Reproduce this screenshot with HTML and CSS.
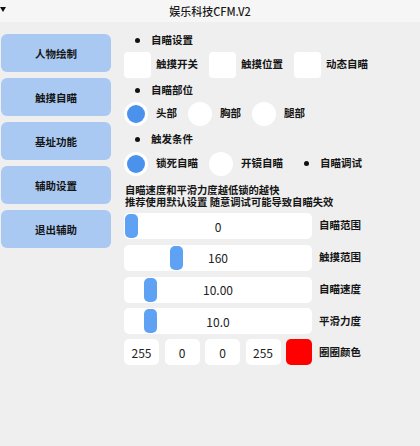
FILE: index.html
```html
<!DOCTYPE html>
<html lang="zh">
<head>
    <meta charset="UTF-8">
    <meta name="viewport" content="width=device-width, initial-scale=1.0">
    <title>娱乐科技CFM.V2</title>
    <link rel="stylesheet" href="styles.css">
</head>
<body>
    <header class="titleBar">
        <span class="collapse"></span>
        <span class="title">娱乐科技CFM.V2</span>
    </header>

    <main class="layout">
        <!-- left menu -->
        <nav class="sideMenu">
            <div class="menuBtn">人物绘制</div>
            <div class="menuBtn">触摸自瞄</div>
            <div class="menuBtn">基址功能</div>
            <div class="menuBtn">辅助设置</div>
            <div class="menuBtn">退出辅助</div>
        </nav>

        <!-- settings panel -->
        <section class="panel">
            <div class="heading">自瞄设置</div>
            <div class="optRow">
                <div class="opt"><span class="box"></span><span class="lbl">触摸开关</span></div>
                <div class="opt"><span class="box"></span><span class="lbl">触摸位置</span></div>
                <div class="opt"><span class="box"></span><span class="lbl">动态自瞄</span></div>
            </div>

            <div class="heading">自瞄部位</div>
            <div class="optRow radioRow">
                <div class="opt"><span class="radio on"></span><span class="lbl">头部</span></div>
                <div class="opt"><span class="radio"></span><span class="lbl">胸部</span></div>
                <div class="opt"><span class="radio"></span><span class="lbl">腿部</span></div>
            </div>

            <div class="heading tall">触发条件</div>
            <div class="optRow radioRow">
                <div class="opt"><span class="radio on"></span><span class="lbl">锁死自瞄</span></div>
                <div class="opt"><span class="radio"></span><span class="lbl">开镜自瞄</span></div>
                <div class="heading inline">自瞄调试</div>
            </div>

            <div class="note">
                <div class="noteLine">自瞄速度和平滑力度越低锁的越快</div>
                <div class="noteLine">推荐使用默认设置 随意调试可能导致自瞄失效</div>
            </div>

            <div class="sliders">
                <div class="sliderRow">
                    <div class="track"><span class="thumb" style="left: 1px"></span><span class="val">0</span></div>
                    <span class="lbl">自瞄范围</span>
                </div>
                <div class="sliderRow">
                    <div class="track"><span class="thumb" style="left: 46px"></span><span class="val">160</span></div>
                    <span class="lbl">触摸范围</span>
                </div>
                <div class="sliderRow">
                    <div class="track"><span class="thumb" style="left: 20px"></span><span class="val">10.00</span></div>
                    <span class="lbl">自瞄速度</span>
                </div>
                <div class="sliderRow">
                    <div class="track"><span class="thumb" style="left: 20px"></span><span class="val">10.0</span></div>
                    <span class="lbl">平滑力度</span>
                </div>
            </div>

            <div class="colorRow">
                <div class="num">255</div>
                <div class="num">0</div>
                <div class="num">0</div>
                <div class="num">255</div>
                <div class="swatch"></div>
                <span class="lbl colorLabel">圈圈颜色</span>
            </div>
        </section>
    </main>
</body>
</html>
```

FILE: styles.css
```css
/* page base */
body {
    margin: 0;
    background-color: #efefef;
    color: #151515;
    font-family: "Noto Sans CJK SC", "Noto Sans", sans-serif;
    font-size: 10.5px;
    font-weight: 600;
}

/* top bar with title */
.titleBar {
    position: relative;
    height: 22px;
    background-color: #f6f6f6;
    display: flex;
    align-items: center;
    justify-content: center;
}

.collapse {
    position: absolute;
    left: 0;
    top: 7px;
    border-left: 3px solid transparent;
    border-right: 3px solid transparent;
    border-top: 5px solid #111;
}

.title {
    font-size: 11px;
    font-weight: 500;
    color: #1a1a1a;
}

.layout {
    display: flex;
}

/* left menu buttons */
.sideMenu {
    width: 110px;
    margin-left: 1px;
    padding-top: 12px;
    display: flex;
    flex-direction: column;
    gap: 6px;
}

.menuBtn {
    height: 38px;
    border-radius: 6px;
    background-color: #a9c9f3;
    display: flex;
    align-items: center;
    justify-content: center;
}

/* right settings panel */
.panel {
    margin-left: 13px;
    padding-top: 6px;
    width: 280px;
}

/* label text sits centred on its control */
.lbl {
    line-height: 1;
    margin-top: -1px;
}

.heading {
    height: 24px;
    display: flex;
    align-items: center;
    padding-left: 11px;
    line-height: 1;
}

.heading::before {
    content: "";
    width: 5px;
    height: 5px;
    border-radius: 50%;
    background-color: #111;
    margin-right: 11px;
}

.heading.tall {
    height: 26px;
}

.heading.inline {
    height: auto;
    padding-left: 10px;
    margin-top: -1px;
}

.optRow {
    height: 26px;
    display: flex;
    align-items: center;
    gap: 11px;
}

.radioRow {
    height: 24px;
}

.opt {
    display: flex;
    align-items: center;
}

.box {
    width: 27px;
    height: 26px;
    border-radius: 4px;
    background-color: #fff;
    margin-right: 5px;
}

.radio {
    width: 24px;
    height: 24px;
    border-radius: 50%;
    background-color: #fff;
    margin-right: 8px;
    display: flex;
    align-items: center;
    justify-content: center;
}

.radio.on::after {
    content: "";
    width: 18px;
    height: 18px;
    border-radius: 50%;
    background-color: #4a92ec;
}

.note {
    margin: 8px 0 6px 1px;
    font-size: 10.3px;
}

.noteLine {
    height: 11.6px;
    line-height: 11.6px;
}

/* slider rows */
.sliders {
    display: flex;
    flex-direction: column;
    gap: 5.7px;
}

.sliderRow {
    display: flex;
    align-items: center;
    gap: 7px;
}

.track {
    position: relative;
    width: 188px;
    height: 26px;
    border-radius: 5px;
    background-color: #fff;
    display: flex;
    align-items: center;
    justify-content: center;
}

.thumb {
    position: absolute;
    top: 1px;
    width: 13px;
    height: 24px;
    border-radius: 5px;
    background-color: #5fa2f3;
}

.val {
    font-size: 12px;
    font-weight: 400;
    color: #222;
}

/* colour inputs */
.colorRow {
    margin-top: 5px;
    display: flex;
    align-items: center;
    gap: 5.5px;
}

.num {
    width: 35px;
    height: 26px;
    border-radius: 5px;
    background-color: #fff;
    display: flex;
    align-items: center;
    justify-content: center;
    font-size: 12px;
    font-weight: 400;
    color: #222;
}

.swatch {
    width: 26px;
    height: 26px;
    border-radius: 5px;
    background-color: #f00;
}

.colorLabel {
    margin-left: 1.5px;
}
```
